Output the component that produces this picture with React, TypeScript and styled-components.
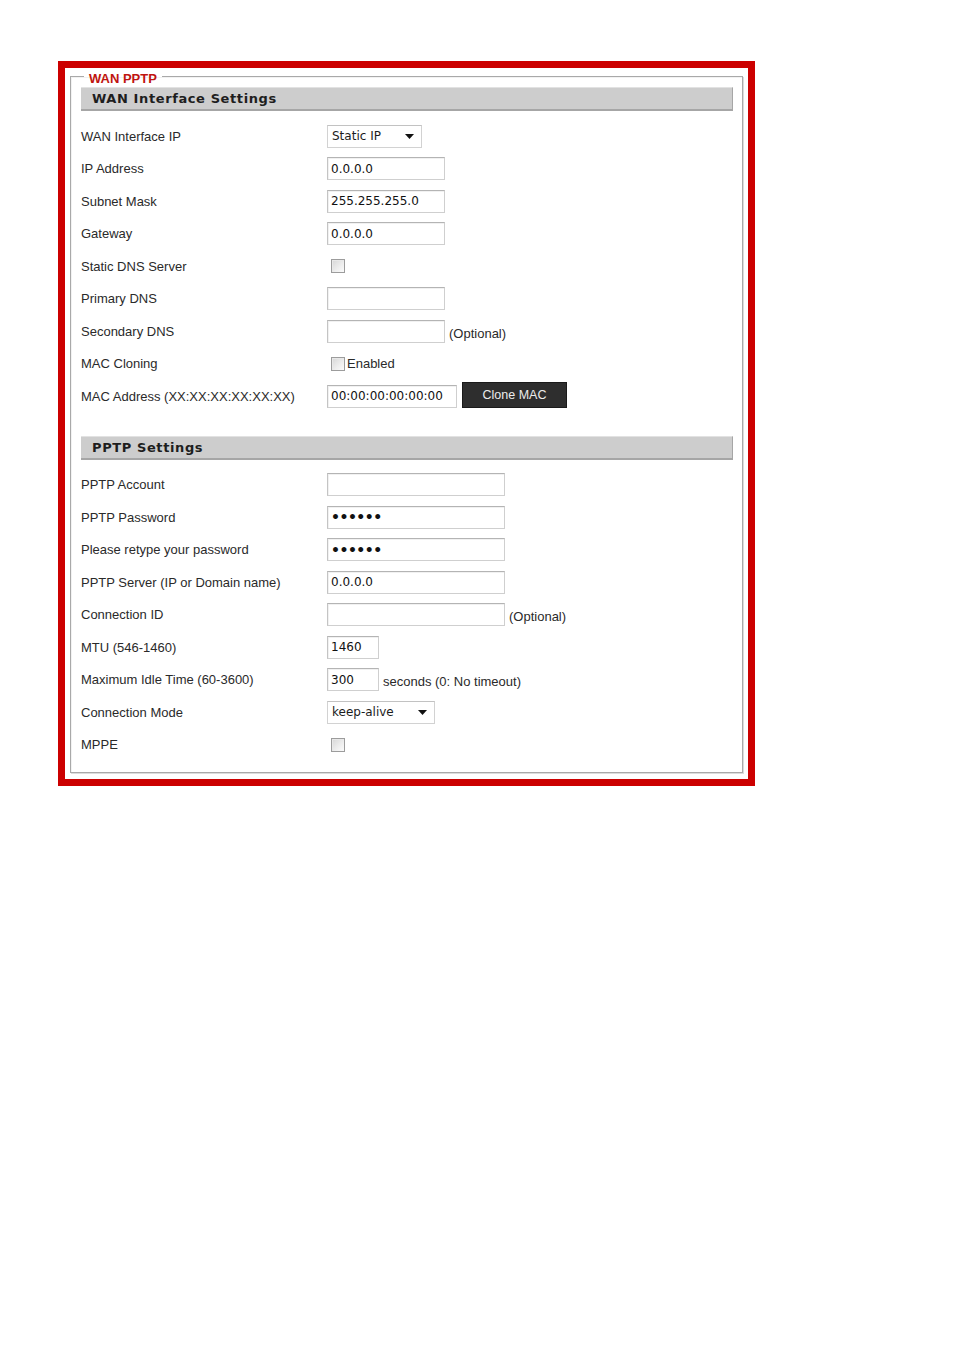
import React from 'react';
import styled, { createGlobalStyle } from 'styled-components';

const GlobalStyle = createGlobalStyle`
  html, body {
    margin: 0;
    padding: 0;
    background: #ffffff;
  }
  body {
    font-family: 'Liberation Sans', Arial, sans-serif;
    color: #222;
  }
`;

const Page = styled.div`
  width: 954px;
  height: 1350px;
  padding: 61px 0 0 58px;
  box-sizing: border-box;
`;

const Frame = styled.div`
  width: 697px;
  height: 725px;
  box-sizing: border-box;
  border: 7px solid #cc0000;
  background: #ffffff;
  padding: 1px 5px 6px 5px;
  display: flex;
  flex-direction: column;
`;

const FieldSet = styled.fieldset`
  flex: 1;
  margin: 0;
  padding: 0 9px 0 10px;
  border: 1px solid #a9a9a9;
  box-shadow: 1px 1px 0 #dcdcdc, inset 1px 1px 0 #f2f2f2;
  min-width: 0;
`;

const Legend = styled.legend`
  margin-left: 3px;
  padding: 0 5px;
  font-family: 'Liberation Sans', Arial, sans-serif;
  font-weight: bold;
  font-size: 13px;
  line-height: 15px;
  color: #c0140f;

  span {
    position: relative;
    top: 2px;
  }
`;

const Section = styled.section<{ $gap?: number }>`
  margin-top: ${(p) => p.$gap ?? 3}px;
`;

const SectionHeader = styled.div`
  height: 24px;
  box-sizing: border-box;
  background: #cdcdcd;
  border-top: 1px solid #e2e2e2;
  border-right: 1px solid #a6a6a6;
  border-bottom: 2px solid #a6a6a6;
  padding-left: 11px;
  display: flex;
  align-items: center;
  font-family: 'DejaVu Sans', Verdana, sans-serif;
  font-weight: bold;
  font-size: 13px;
  letter-spacing: 0.6px;
  color: #1e1e1e;
  margin-bottom: 9px;
`;

const Row = styled.div`
  height: 32.5px;
  display: flex;
  align-items: center;
`;

const Label = styled.div`
  width: 246px;
  flex: none;
  font-size: 13px;
  color: #2a2a2a;
`;

const Control = styled.div`
  display: flex;
  align-items: center;
  gap: 4px;
`;

const TextInput = styled.input<{ $w: number; $secret?: boolean }>`
  width: ${(p) => p.$w}px;
  height: 23px;
  box-sizing: border-box;
  margin: 0;
  padding: 0 3px;
  border: 1px solid #cfcfcf;
  border-top-color: #b4b4b4;
  border-left-color: #c4c4c4;
  box-shadow: inset 1px 1px 0 #f1f1f1;
  background: #ffffff;
  font-family: 'DejaVu Sans', Verdana, sans-serif;
  font-size: ${(p) => (p.$secret ? '14px' : '12px')};
  font-weight: ${(p) => (p.$secret ? 'bold' : 'normal')};
  letter-spacing: ${(p) => (p.$secret ? '-0.5px' : '0')};
  color: #111;
  outline: none;
`;

const SelectBox = styled.div<{ $w: number }>`
  width: ${(p) => p.$w}px;
  height: 23px;
  box-sizing: border-box;
  border: 1px solid #d2d2d2;
  border-top-color: #c2c2c2;
  background: #ffffff;
  display: flex;
  align-items: center;
  justify-content: space-between;
  padding: 0 7px 0 4px;
  font-family: 'DejaVu Sans', Verdana, sans-serif;
  font-size: 12px;
  color: #1c1c1c;
`;

const Caret = styled.svg`
  width: 9px;
  height: 5px;
  display: block;
`;

const CheckBox = styled.span`
  display: inline-block;
  width: 14px;
  height: 14px;
  box-sizing: border-box;
  margin-left: 4px;
  border: 1px solid #9c9c9c;
  background: linear-gradient(135deg, #d6d6d6 0%, #eeeeee 60%, #fbfbfb 100%);
  box-shadow: inset 1px 1px 0 #e8e8e8;
`;

const CheckLabel = styled.span`
  font-size: 13px;
  color: #2a2a2a;
  margin-left: -2px;
`;

const Note = styled.span<{ $drop?: number }>`
  font-size: 13px;
  color: #2a2a2a;
  position: relative;
  top: ${(p) => p.$drop ?? 2}px;
`;

const DarkButton = styled.button`
  height: 26px;
  width: 105px;
  margin: 0 0 0 1px;
  padding: 0;
  border: 1px solid #1a1a1a;
  background: #2e2e2e;
  color: #ececec;
  font-family: 'Liberation Sans', Arial, sans-serif;
  font-size: 12.5px;
  cursor: pointer;
  position: relative;
  top: -1px;
`;

const Select: React.FC<{ w: number; value: string }> = ({ w, value }) => (
  <SelectBox $w={w}>
    <span>{value}</span>
    <Caret viewBox="0 0 9 5">
      <path d="M0 0 H9 L4.5 5 Z" fill="#111" />
    </Caret>
  </SelectBox>
);

const Field: React.FC<{ label: string; children: React.ReactNode }> = ({ label, children }) => (
  <Row>
    <Label>{label}</Label>
    <Control>{children}</Control>
  </Row>
);

export default function App() {
  return (
    <>
      <GlobalStyle />
      <Page>
        <Frame>
          <FieldSet>
            <Legend>
              <span>WAN PPTP</span>
            </Legend>

            <Section>
              <SectionHeader>WAN Interface Settings</SectionHeader>
              <Field label="WAN Interface IP">
                <Select w={95} value="Static IP" />
              </Field>
              <Field label="IP Address">
                <TextInput $w={118} readOnly value="0.0.0.0" />
              </Field>
              <Field label="Subnet Mask">
                <TextInput $w={118} readOnly value="255.255.255.0" />
              </Field>
              <Field label="Gateway">
                <TextInput $w={118} readOnly value="0.0.0.0" />
              </Field>
              <Field label="Static DNS Server">
                <CheckBox />
              </Field>
              <Field label="Primary DNS">
                <TextInput $w={118} readOnly value="" />
              </Field>
              <Field label="Secondary DNS">
                <TextInput $w={118} readOnly value="" />
                <Note>(Optional)</Note>
              </Field>
              <Field label="MAC Cloning">
                <CheckBox />
                <CheckLabel>Enabled</CheckLabel>
              </Field>
              <Field label="MAC Address (XX:XX:XX:XX:XX:XX)">
                <TextInput $w={130} readOnly value="00:00:00:00:00:00" />
                <DarkButton type="button">Clone MAC</DarkButton>
              </Field>
            </Section>

            <Section $gap={23}>
              <SectionHeader>PPTP Settings</SectionHeader>
              <Field label="PPTP Account">
                <TextInput $w={178} readOnly value="" />
              </Field>
              <Field label="PPTP Password">
                <TextInput $w={178} $secret readOnly value="••••••" />
              </Field>
              <Field label="Please retype your password">
                <TextInput $w={178} $secret readOnly value="••••••" />
              </Field>
              <Field label="PPTP Server (IP or Domain name)">
                <TextInput $w={178} readOnly value="0.0.0.0" />
              </Field>
              <Field label="Connection ID">
                <TextInput $w={178} readOnly value="" />
                <Note>(Optional)</Note>
              </Field>
              <Field label="MTU (546-1460)">
                <TextInput $w={52} readOnly value="1460" />
              </Field>
              <Field label="Maximum Idle Time (60-3600)">
                <TextInput $w={52} readOnly value="300" />
                <Note>seconds (0: No timeout)</Note>
              </Field>
              <Field label="Connection Mode">
                <Select w={108} value="keep-alive" />
              </Field>
              <Field label="MPPE">
                <CheckBox />
              </Field>
            </Section>
          </FieldSet>
        </Frame>
      </Page>
    </>
  );
}
